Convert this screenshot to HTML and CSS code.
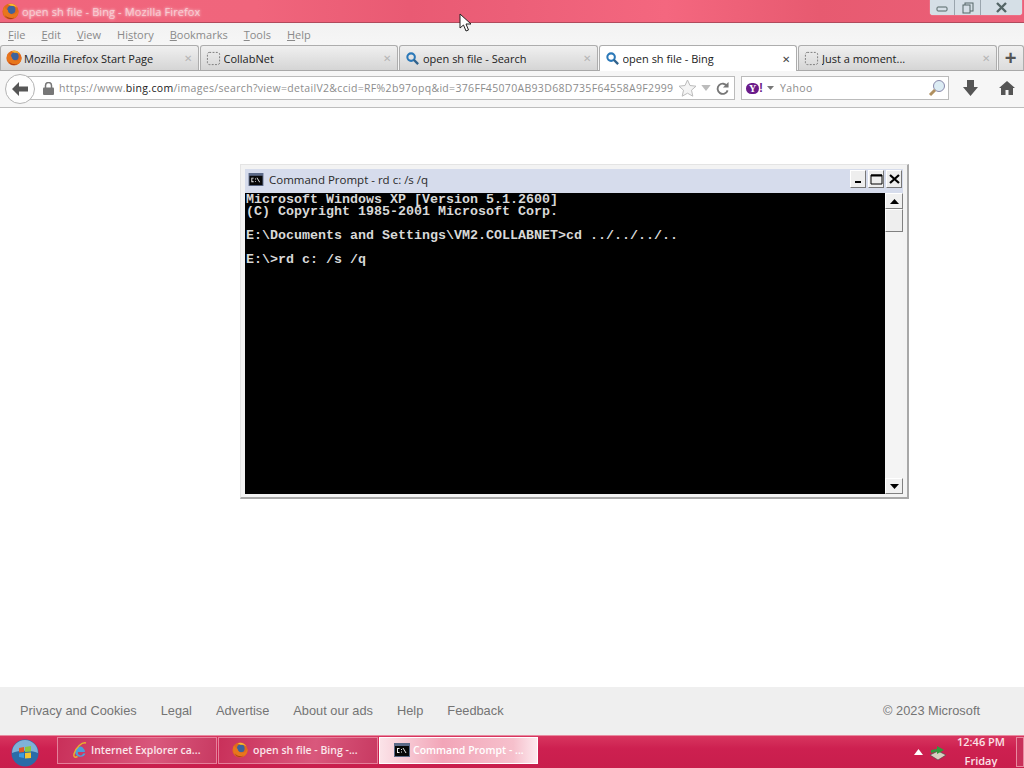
FILE: index.html
```html
<!DOCTYPE html>
<html lang="en">
<head>
  <meta charset="UTF-8">
  <meta name="viewport" content="width=device-width, initial-scale=1.0">
  <title>open sh file - Bing - Mozilla Firefox</title>
  <link rel="stylesheet" href="styles.css">
</head>
<body>
  <svg class="defs" width="0" height="0">
    <symbol id="firefox" viewBox="0 0 20 20">
      <circle cx="10" cy="10" r="9.500" fill="#e0691c"/>
      <circle cx="11" cy="8" r="4.800" fill="#3d639c"/>
      <path d="M2.500 4C.5 8 1 13 4 16c3.500 3.500 9.500 3.500 13 0 2-2 2.800-5 2.200-8-.7 3-2.700 5.300-6 5.500C10 13.700 7 11.500 7 8.500 5.200 8 4 6 2.500 4z" fill="#e8761c"/>
      <path d="M7 1.500c4-1.700 9 0 11 4-2-1.500-4-2.300-6-2-2 0-3-1-5-2z" fill="#f5b934"/>
      <path d="M3.500 14.500c2.500 3 7 4 11 2.500-3.500 3-9 2.500-11-2.500z" fill="#a8381a"/>
    </symbol>
    <symbol id="blank" viewBox="0 0 16 16">
      <rect x="1.500" y="1.500" width="13" height="13" rx="2" fill="none" stroke="#777" stroke-dasharray="2 1.500"/>
    </symbol>
    <symbol id="lens" viewBox="0 0 16 16">
      <circle cx="6.500" cy="6.500" r="4" fill="none" stroke="#2a78b8" stroke-width="2.200"/>
      <path d="M9.500 9.500l4.500 4.500" stroke="#30628c" stroke-width="2.400"/>
    </symbol>
    <symbol id="cmd" viewBox="0 0 16 14">
      <rect width="16" height="14" fill="#5c6a88"/>
      <rect x="1" y="3" width="14" height="10" fill="#080808"/>
      <path d="M3 5H5.500V6H4V9H5.500V10H3zM7 6h1v1H7zM7 8.500h1v1H7zM9.500 5l3 5h-1l-3-5z" fill="#eee"/>
    </symbol>
  </svg>

  <div class="title-bar">
    <svg class="title-icon"><use href="#firefox"/></svg>
    <span class="title-text">open sh file - Bing - Mozilla Firefox</span>
    <div class="win-controls">
      <span class="ctl ctl-min"><svg width="12" height="8"><rect x="1" y="3" width="10" height="4" rx="1" fill="none" stroke="#566"/></svg></span>
      <span class="ctl ctl-max"><svg width="12" height="12"><rect x="3" y="1" width="8" height="8" fill="none" stroke="#566"/><rect x="1" y="3" width="7" height="8" fill="#d5dfe6" stroke="#566"/></svg></span>
      <span class="ctl ctl-close"><svg width="13" height="11"><path d="M2 1l9 9M11 1l-9 9" stroke="#566" stroke-width="2.400"/></svg></span>
    </div>
    <svg class="cursor" width="13" height="19" viewBox="0 0 13 19"><path d="M1 1v14l3.500-3 2.500 6 2.500-1-2.500-6h5z" fill="#fff" stroke="#222"/></svg>
  </div>

  <div class="menu-bar">
    <span><u>F</u>ile</span>
    <span><u>E</u>dit</span>
    <span><u>V</u>iew</span>
    <span>Hi<u>s</u>tory</span>
    <span><u>B</u>ookmarks</span>
    <span><u>T</u>ools</span>
    <span><u>H</u>elp</span>
  </div>

  <div class="tab-strip">
    <div class="tab"><svg class="tab-icon tab-ff"><use href="#firefox"/></svg><span class="tab-label">Mozilla Firefox Start Page</span><span class="tab-x">✕</span></div>
    <div class="tab"><svg class="tab-icon"><use href="#blank"/></svg><span class="tab-label">CollabNet</span><span class="tab-x">✕</span></div>
    <div class="tab"><svg class="tab-icon"><use href="#lens"/></svg><span class="tab-label">open sh file - Search</span><span class="tab-x">✕</span></div>
    <div class="tab tab-active"><svg class="tab-icon"><use href="#lens"/></svg><span class="tab-label">open sh file - Bing</span><span class="tab-x">✕</span></div>
    <div class="tab"><svg class="tab-icon"><use href="#blank"/></svg><span class="tab-label">Just a moment...</span><span class="tab-x">✕</span></div>
    <div class="tab-new">+</div>
  </div>

  <div class="nav-bar">
    <div class="back-btn">
      <svg width="18" height="16" viewBox="0 0 18 16"><path d="M8 1L1 8l7 7V10.500h9v-5H8z" fill="#555"/></svg>
    </div>
    <div class="url-box">
      <svg class="lock" width="11" height="13" viewBox="0 0 11 13"><path d="M2.500 6V3.500a3 3 0 0 1 6 0V6" fill="none" stroke="#777" stroke-width="1.500"/><rect y="5.500" width="11" height="7.500" rx="1" fill="#777"/></svg>
      <span class="url-text">https://www.<b>bing.com</b>/images/search?view=detailV2&amp;ccid=RF%2b97opq&amp;id=376FF45070AB93D68D735F64558A9F2999</span>
      <svg class="star" width="19" height="18" viewBox="0 0 19 18"><path d="M9.500 1l2.500 5.500 6 .7-4.500 4 1.300 6-5.300-3-5.300 3 1.300-6-4.500-4 6-.7z" fill="#f4f4f4" stroke="#bbb"/></svg>
      <svg class="drop" width="10" height="6" viewBox="0 0 11 7"><path d="M0 0h11L5.500 7z" fill="#bcbcbc"/></svg>
      <svg class="reload" width="13" height="13" viewBox="0 0 14 14"><path d="M12 4.500A5.500 5.500 0 1 0 12.500 9" fill="none" stroke="#777" stroke-width="2"/><path d="M13.500 0v6h-6z" fill="#777"/></svg>
    </div>
    <div class="search-box">
      <span class="yahoo-badge">Y</span><span class="yahoo-bang">!</span>
      <svg class="yahoo-drop" width="7" height="4" viewBox="0 0 7 4"><path d="M0 0h7L3.500 4z" fill="#777"/></svg>
      <span class="search-text">Yahoo</span>
      <svg class="search-go" width="18" height="18" viewBox="0 0 18 18"><circle cx="11" cy="7" r="5.500" fill="#dcecf4" stroke="#88a"/><path d="M7 11l-5 5" stroke="#b09060" stroke-width="3"/></svg>
    </div>
    <svg class="tool-down" width="15" height="16" viewBox="0 0 15 16"><path d="M4 0h7v7h4l-7.500 9L0 7h4z" fill="#555"/></svg>
    <svg class="tool-home" width="16" height="14" viewBox="0 0 16 14"><path d="M8 0l8 7h-2v7H9.500V9h-3v5H2V7H0z" fill="#555"/></svg>
  </div>

  <main class="page">
    <div class="cmd-window">
      <div class="cmd-title">
        <svg class="cmd-icon"><use href="#cmd"/></svg>
        <span class="cmd-title-text">Command Prompt - rd c: /s /q</span>
        <div class="cmd-btns">
          <span class="cmd-btn"><svg width="9" height="9"><rect x="1" y="6" width="6" height="2"/></svg></span>
          <span class="cmd-btn"><svg width="13" height="11"><path d="M1 1h11v9H1z" fill="none" stroke="#000"/><path d="M1 1.500h11" stroke="#000" stroke-width="2"/></svg></span>
          <span class="cmd-btn"><svg width="11" height="10"><path d="M1 1l9 8M10 1l-9 8" stroke="#000" stroke-width="2.200"/></svg></span>
        </div>
      </div>
      <div class="cmd-body">
        <pre class="console">Microsoft Windows XP [Version 5.1.2600]
(C) Copyright 1985-2001 Microsoft Corp.

E:\Documents and Settings\VM2.COLLABNET&gt;cd ../../../..

E:\&gt;rd c: /s /q</pre>
        <div class="scrollbar">
          <span class="sb-btn"><svg width="9" height="5"><path d="M0 5h9L4.500 0z"/></svg></span>
          <span class="sb-thumb"></span>
          <span class="sb-track"></span>
          <span class="sb-btn"><svg width="9" height="5"><path d="M0 0h9L4.500 5z"/></svg></span>
        </div>
      </div>
    </div>
  </main>

  <footer class="foot">
    <nav class="foot-links">
      <span>Privacy and Cookies</span>
      <span>Legal</span>
      <span>Advertise</span>
      <span>About our ads</span>
      <span>Help</span>
      <span>Feedback</span>
    </nav>
    <span class="copy">© 2023 Microsoft</span>
  </footer>

  <div class="taskbar">
    <div class="start-orb">
      <svg width="28" height="28" viewBox="0 0 28 28">
        <circle cx="14" cy="14" r="13.500" fill="#2a6ca8"/>
        <path d="M1 14a13 13 0 0 1 26 0c-7-3-19-3-26 0z" fill="#7fb2d8"/>
        <path d="M8 9l5-1v5l-5 .5z" fill="#e0552a"/>
        <path d="M14 8l6-1v5.500l-6 .5z" fill="#8cc63f"/>
        <path d="M8 14.500l5-.5v5l-5-1z" fill="#3a9ae0"/>
        <path d="M14 14l6-.5V19l-6 .5z" fill="#f4c430"/>
      </svg>
    </div>
    <div class="task">
      <svg class="task-icon" width="16" height="18" viewBox="0 0 16 18"><path d="M3 11a5 5 0 0 1 10 0H6a2.500 2.500 0 0 0 5 1.500h2.500A5.500 5.500 0 0 1 3 11z" fill="#4aa0dc"/><path d="M6 8h5a2.500 2.500 0 0 0-5 0z" fill="#4aa0dc"/><path d="M14 2c-4-1-10 4-12 11-.7 3 1 4 3.500 2.500" fill="none" stroke="#e8b030" stroke-width="1.500"/></svg>
      <span>Internet Explorer ca...</span>
    </div>
    <div class="task">
      <svg class="task-icon task-ff"><use href="#firefox"/></svg>
      <span>open sh file - Bing -...</span>
    </div>
    <div class="task task-active">
      <svg class="task-icon task-cmd"><use href="#cmd"/></svg>
      <span>Command Prompt - ...</span>
    </div>
    <div class="tray">
      <svg class="tray-up" width="9" height="6" viewBox="0 0 9 6"><path d="M0 6h9L4.500 0z" fill="#fff"/></svg>
      <svg class="tray-net" width="18" height="17" viewBox="0 0 18 17"><path d="M1 11l8-4 8 4-8 5z" fill="#d8d0c0" stroke="#444" stroke-width=".6"/><path d="M2 6l6-1V2l7 4-7 4V7.500L2 9z" fill="#2e9a3c"/></svg>
      <div class="clock">
        <span class="clock-time">12:46 PM</span>
        <span class="clock-day">Friday</span>
      </div>
    </div>
    <div class="show-desktop"></div>
  </div>
</body>
</html>
```

FILE: styles.css
```css
* {
  box-sizing: border-box;
  margin: 0;
  padding: 0;
}

html,
body {
  width: 1024px;
  height: 768px;
  overflow: hidden;
}

body {
  display: flex;
  flex-direction: column;
  background: #fff;
  font-family: "Open Sans", sans-serif;
}

.defs {
  position: absolute;
}

/* Firefox window chrome */
.title-bar {
  position: relative;
  display: flex;
  align-items: center;
  flex: 0 0 23px;
  padding-left: 2px;
  background: linear-gradient(90deg, #f0667d 0%, #f0657c 25%, #e95a73 40%, #ec5f78 50%, #f4677f 65%, #e75a70 80%, #ec6079 100%);
  border-bottom: 1px solid #b04a5c;
}

.title-icon {
  width: 17px;
  height: 17px;
}

.title-text {
  margin-left: 3px;
  font-size: 11px;
  letter-spacing: 0.1px;
  color: #f8cdd3;
  text-shadow: 0 0 3px #fff;
  white-space: nowrap;
}

.win-controls {
  position: absolute;
  top: 0;
  left: 930px;
  display: flex;
  height: 15px;
  border-radius: 0 0 3px 3px;
  background: #d5dfe6;
  box-shadow: 0 0 1px #fff;
}

.ctl {
  display: flex;
  align-items: center;
  justify-content: center;
  height: 15px;
  border-right: 1px solid #9aa5ad;
}

.ctl-min { width: 25px; }
.ctl-max { width: 26px; }
.ctl-close { width: 41px; border-right: 0; }

.cursor {
  position: absolute;
  left: 459px;
  top: 13px;
  z-index: 5;
}

.menu-bar {
  display: flex;
  align-items: center;
  flex: 0 0 22px;
  gap: 16px;
  padding-left: 8px;
  background: linear-gradient(#f2f2f2, #f6f6f6);
  font-size: 11px;
  color: #8a8a8a;
}

.tab-strip {
  display: flex;
  align-items: flex-end;
  flex: 0 0 25px;
  gap: 1px;
  background: #f6f6f6;
  border-bottom: 1px solid #a9a9a9;
}

.tab {
  display: flex;
  align-items: center;
  width: 198.500px;
  height: 25px;
  padding: 0 6px 0 5px;
  border: 1px solid #adadad;
  border-bottom: 0;
  border-radius: 3px 3px 0 0;
  background: linear-gradient(#f0f0f0, #d5d5d5);
  font-size: 11px;
  color: #222;
}

.tab-active {
  height: 26px;
  margin-bottom: -1px;
  background: #fff;
}

.tab-icon {
  flex: none;
  width: 15px;
  height: 15px;
  margin-right: 3px;
}

.tab-ff {
  width: 16px;
  height: 16px;
  margin-right: 2px;
}

.tab-label {
  flex: 1;
  white-space: nowrap;
  overflow: hidden;
}

.tab-x {
  font-size: 10px;
  color: #b5b5b5;
}

.tab-active .tab-x {
  color: #444;
}

.tab-new {
  display: flex;
  align-items: center;
  justify-content: center;
  width: 26px;
  height: 25px;
  border: 1px solid #adadad;
  border-bottom: 0;
  border-radius: 3px 3px 0 0;
  background: linear-gradient(#f0f0f0, #dcdcdc);
  font-family: "Liberation Sans", sans-serif;
  font-size: 20px;
  font-weight: 700;
  color: #555;
}

.nav-bar {
  position: relative;
  display: flex;
  align-items: center;
  flex: 0 0 37px;
  padding: 0 0 2px 20px;
  background: #f6f6f6;
  border-bottom: 1px solid #bdbdbd;
}

.back-btn {
  position: absolute;
  left: 5px;
  top: 3px;
  display: flex;
  align-items: center;
  justify-content: center;
  width: 30px;
  height: 30px;
  border: 1px solid #b4b4b4;
  border-radius: 50%;
  background: #fdfdfd;
}

.url-box {
  display: flex;
  align-items: center;
  width: 715px;
  height: 24px;
  padding-left: 22px;
  border: 1px solid #bbb;
  background: #fff;
}

.lock {
  flex: none;
  margin-right: 5px;
}

.url-text {
  flex: 0 0 616px;
  white-space: nowrap;
  font-size: 10.500px;
  letter-spacing: 0.32px;
  color: #8c8c8c;
}

.url-text b {
  font-weight: 400;
  color: #222;
}

.star {
  flex: none;
  margin-left: 3px;
}

.drop {
  flex: none;
  margin-left: 4px;
}

.reload {
  flex: none;
  margin-left: 5px;
}

.search-box {
  display: flex;
  align-items: center;
  width: 208px;
  height: 24px;
  margin-left: 6px;
  padding-left: 4px;
  border: 1px solid #bbb;
  background: #fff;
}

.yahoo-badge {
  width: 13px;
  height: 11px;
  border-radius: 6px;
  background: #6a1b8a;
  font-family: "Liberation Serif", serif;
  font-size: 10px;
  font-weight: 700;
  line-height: 11px;
  text-align: center;
  color: #fff;
}

.yahoo-bang {
  width: 4px;
  font-family: "Liberation Sans", sans-serif;
  font-size: 12px;
  font-weight: 700;
  color: #6a1b8a;
}

.yahoo-drop {
  margin-left: 4px;
}

.search-text {
  flex: 1;
  margin-left: 6px;
  font-size: 10.500px;
  letter-spacing: 0.4px;
  color: #8c8c8c;
}

.search-go {
  margin-right: 2px;
}

.tool-down {
  margin-left: 14px;
}

.tool-home {
  margin-left: 21px;
}

/* Page */
.page {
  position: relative;
  flex: 1;
  background: #fff;
}

.cmd-window {
  position: absolute;
  left: 240px;
  top: 56px;
  width: 669px;
  height: 335px;
  padding: 4px;
  background: #f3f3f3;
  border: 1px solid #e4e4e4;
  border-right: 2px solid #a8a8a8;
  border-bottom: 2px solid #a8a8a8;
}

.cmd-title {
  display: flex;
  align-items: center;
  height: 24px;
  padding-left: 3px;
  background: #d6dcec;
}

.cmd-icon {
  width: 16px;
  height: 13px;
  margin-top: -4px;
}

.cmd-title-text {
  flex: 1;
  margin-left: 5px;
  margin-top: -4px;
  font-size: 11.500px;
  color: #2a2a2a;
}

.cmd-btns {
  display: flex;
  gap: 2px;
  margin-top: -4px;
  padding-right: 1px;
}

.cmd-btn {
  display: flex;
  align-items: center;
  justify-content: center;
  width: 16px;
  height: 18px;
  background: #eee;
  border: 1px solid #fff;
  border-right-color: #777;
  border-bottom-color: #777;
}

.cmd-body {
  display: flex;
  height: 301px;
}

.console {
  flex: 1;
  padding: 1px 0 0 1px;
  background: #000;
  font-family: "Liberation Mono", monospace;
  font-size: 13.330px;
  font-weight: 700;
  line-height: 12px;
  color: #d8d8d8;
}

.scrollbar {
  display: flex;
  flex-direction: column;
  width: 18px;
  background: #f4f4f4;
}

.sb-btn {
  display: flex;
  align-items: center;
  justify-content: center;
  flex: 0 0 16px;
  background: #f0f0f0;
  border: 1px solid #fff;
  border-right-color: #808080;
  border-bottom-color: #808080;
}

.sb-thumb {
  flex: 0 0 23px;
  background: #eee;
  border: 1px solid #fff;
  border-right-color: #808080;
  border-bottom-color: #808080;
}

.sb-track {
  flex: 1;
}

/* Bing footer */
.foot {
  display: flex;
  align-items: center;
  justify-content: space-between;
  flex: 0 0 48px;
  padding: 0 44px 2px 20px;
  background: #efefef;
  font-family: "Liberation Sans", sans-serif;
  font-size: 12.800px;
  color: #747474;
}

.foot-links {
  display: flex;
  gap: 24px;
}

/* Windows taskbar */
.taskbar {
  display: flex;
  align-items: center;
  flex: 0 0 33px;
  background: linear-gradient(#d8355f, #cd2050 40%, #c81e4c);
  border-top: 1px solid #e88aa0;
}

.start-orb {
  display: flex;
  justify-content: center;
  width: 50px;
  margin-top: 1px;
  margin-right: 7px;
}

.task {
  display: flex;
  align-items: center;
  width: 160px;
  height: 27px;
  margin-right: 1px;
  margin-top: -4px;
  padding-left: 14px;
  border: 1px solid #e5809a;
  background: linear-gradient(100deg, #c9305a, #d9587c 60%, #c83a62);
  font-size: 10.500px;
  font-weight: 600;
  color: #fbe6ea;
  white-space: nowrap;
}

.task-active {
  width: 159px;
  background: linear-gradient(90deg, #fbe3e8, #f2a5b8 40%, #f6c0cc 85%, #fde9ee);
  border-color: #fff;
  color: #fff;
}

.task-icon {
  flex: none;
  width: 16px;
  height: 18px;
  margin-right: 3px;
}

.task-ff {
  margin-left: -1px;
  margin-right: 5px;
}

.task-cmd {
  height: 14px;
  margin-right: 3px;
}

.tray {
  display: flex;
  align-items: center;
  flex: 1;
  padding-left: 375px;
}

.tray-net {
  margin-left: 6px;
}

.clock {
  display: flex;
  flex-direction: column;
  align-items: center;
  width: 64px;
  height: 32px;
  margin-left: 2px;
  margin-top: -2px;
  overflow: hidden;
  font-size: 11px;
  font-weight: 600;
  line-height: 14px;
  color: #fbe3e8;
}

.clock-day {
  margin-top: 5px;
}

.show-desktop {
  flex: 0 0 8px;
  height: 30px;
  border: 1px solid #e88aa0;
  background: #c9305a;
}
```
